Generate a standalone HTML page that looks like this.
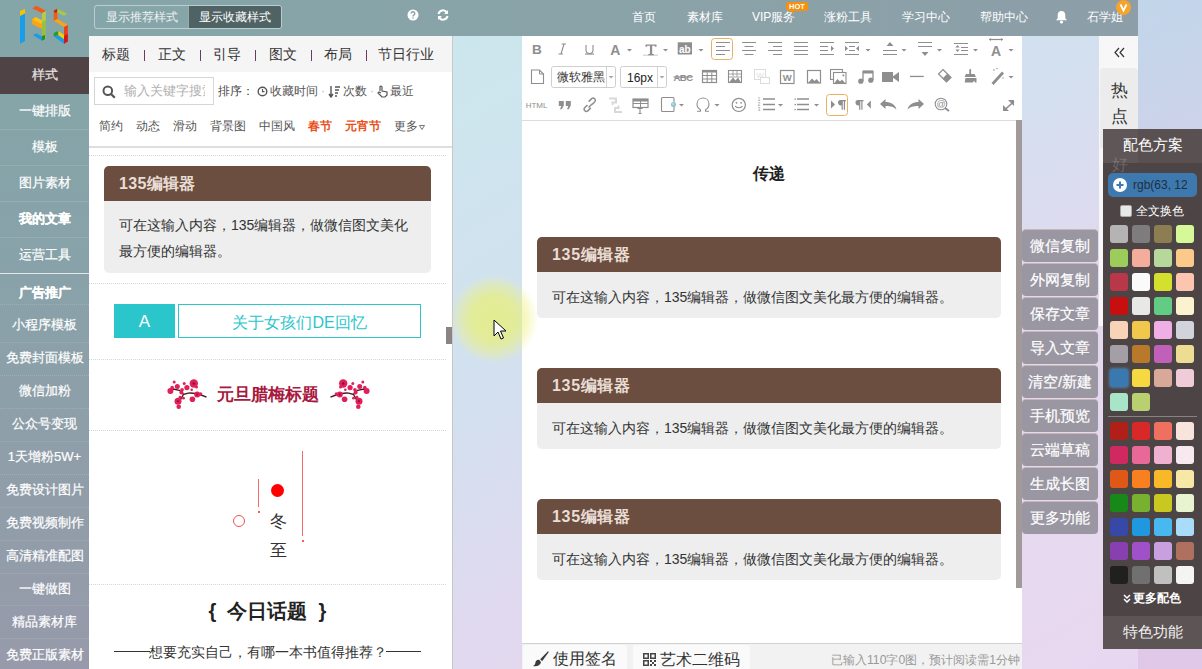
<!DOCTYPE html>
<html><head><meta charset="utf-8">
<style>
*{margin:0;padding:0;box-sizing:border-box}
html,body{width:1202px;height:669px;overflow:hidden}
body{font-family:"Liberation Sans",sans-serif;position:relative;background:linear-gradient(150deg,#c8e8ee 0%,#cde6ee 26%,#d3e0ef 50%,#e1d9ef 67%,#e7d9f0 88%,#e8d6f0 100%)}
.a{position:absolute}
.c{text-align:center;white-space:nowrap}
#topbar{left:0;top:0;width:1138px;height:36px;background:linear-gradient(90deg,#84a6a8 0%,#89a3a8 50%,#8d9ea8 100%)}
#sidebar{left:0;top:36px;width:89px;height:633px;background:linear-gradient(180deg,#84a6a8 0%,#88a2a9 35%,#979aaa 100%)}
.si{position:absolute;left:0;width:89px;text-align:center;color:#fff;font-size:13px;line-height:16px;white-space:nowrap;-webkit-text-stroke:.2px #fff}
.sl{position:absolute;left:0;width:89px;height:0;border-top:1px dotted rgba(255,255,255,.16)}
.nav{position:absolute;top:9px;color:#fff;font-size:12px;line-height:17px;white-space:nowrap}
#panel{left:89px;top:36px;width:364px;height:633px;background:#fff;border-right:1px solid #c8c8c8;overflow:hidden}
.tab{position:absolute;top:10px;font-size:14px;line-height:16px;color:#333}
.bar{position:absolute;top:14px;width:1px;height:11px;background:#6e3a64}
.dot{position:absolute;left:0;width:357px;height:0;border-top:1px dotted #d5d5d5}
.card{position:absolute;left:15px;width:327px;border-radius:5px;overflow:hidden;background:#eeeeee}
.card .h{height:35px;background:#6b4e3f;color:#e9ddd5;font-weight:bold;font-size:16px;line-height:35px;padding-left:15px;letter-spacing:.3px}
.card .b{padding:10.5px 15px 0 15px;font-size:14px;line-height:26px;color:#333}
#editor{left:522px;top:36px;width:500px;height:633px;background:#fff}
.ecard{position:absolute;left:15px;width:464px;border-radius:5px;overflow:hidden;background:#eeeeee}
.ecard .h{height:35px;background:#6b4e3f;color:#e9ddd5;font-weight:bold;font-size:16px;line-height:35px;padding-left:15px;letter-spacing:.7px}
.ecard .b{height:46px;font-size:14px;line-height:46px;color:#333;padding:1.5px 0 0 15px;white-space:nowrap;overflow:hidden}
.ic{position:absolute}
.fb{position:absolute;left:1022px;width:76px;height:33px;background:#9a96a2;border-top:1px solid #c9b6b5;border-radius:4px;color:#fff;font-size:15px;line-height:31px;text-align:center;white-space:nowrap;-webkit-text-stroke:.2px #fff}
#cp{left:1103px;top:129px;width:99px;height:520px;background:#4c4445}
.sw{position:absolute;width:18px;height:18px;border-radius:3px}
</style></head><body>

<div class="a" style="left:1138px;top:0;width:64px;height:669px;background:linear-gradient(180deg,rgba(78,141,197,.13),rgba(110,120,190,.08) 50%,rgba(152,74,160,.1))"></div>
<!-- top bar -->
<div id="topbar" class="a">
  <div class="a" style="left:94px;top:5px;width:188px;height:24px;border:1px solid rgba(255,255,255,.45);border-radius:3px;overflow:hidden">
    <div class="a c" style="left:0;top:0;width:93px;height:22px;color:#eef2f2;font-size:12px;line-height:22px">显示推荐样式</div>
    <div class="a c" style="left:93px;top:0;width:93px;height:22px;background:#4f6264;border-left:1px solid rgba(255,255,255,.45);color:#fff;font-size:12px;line-height:22px">显示收藏样式</div>
  </div>
  <svg class="a" style="left:407px;top:9px" width="12" height="12" viewBox="0 0 12 12"><circle cx="6" cy="6" r="5.5" fill="#fff"/><path d="M4.2 4.6a1.8 1.8 0 1 1 2.6 1.6c-.6.3-.8.6-.8 1.2" stroke="#86a3a8" stroke-width="1.4" fill="none"/><circle cx="6" cy="9" r=".8" fill="#86a3a8"/></svg>
  <svg class="a" style="left:437px;top:9px" width="12" height="12" viewBox="0 0 12 12"><path d="M1.5 5a4.5 4.5 0 0 1 8.2-1.6M10.5 7a4.5 4.5 0 0 1-8.2 1.6" stroke="#fff" stroke-width="2" fill="none"/><path d="M11 1v4H7z M1 11V7h4z" fill="#fff"/></svg>
  <div class="nav" style="left:632px">首页</div>
  <div class="nav" style="left:687px">素材库</div>
  <div class="nav" style="left:752px">VIP服务</div>
  <div class="a c" style="left:786px;top:2px;width:22px;height:9px;background:#f7900a;border-radius:2px;color:#fff;font-size:7.5px;line-height:9px;font-weight:bold">HOT</div><div class="a" style="left:791px;top:11px;width:0;height:0;border-top:3px solid #f7900a;border-left:3px solid transparent"></div>
  <div class="nav" style="left:824px">涨粉工具</div>
  <div class="nav" style="left:902px">学习中心</div>
  <div class="nav" style="left:980px">帮助中心</div>
  <svg class="a" style="left:1055px;top:10px" width="13" height="14" viewBox="0 0 13 14"><path d="M6.5 1c2.5 0 3.8 2 3.8 4.2v3l1.7 2H1l1.7-2v-3C2.7 3 4 1 6.5 1z" fill="#fff"/><circle cx="6.5" cy="12" r="1.6" fill="#fff"/></svg>
  <div class="nav" style="left:1087px">石学姐</div>
  <svg class="a" style="left:1115px;top:-1px" width="17" height="17" viewBox="0 0 17 17"><circle cx="8.5" cy="8.5" r="7.5" fill="#f4a52a"/><path d="M5.5 5.5l3 6 3-6" stroke="#fff" stroke-width="1.8" fill="none"/></svg>
</div>

<!-- sidebar -->
<div id="sidebar" class="a">
  <div class="a" style="left:0;top:21px;width:89px;height:37px;background:#4f4345"></div>
  <div class="si" style="top:31px;color:#e2dcdc">样式</div>
  <div class="si" style="top:67px">一键排版</div>
  <div class="sl" style="top:93px;border-top-style:solid;border-top-color:rgba(255,255,255,.12)"></div>
  <div class="si" style="top:103px">模板</div>
  <div class="sl" style="top:129px;border-top-style:solid;border-top-color:rgba(255,255,255,.12)"></div>
  <div class="si" style="top:139px">图片素材</div>
  <div class="sl" style="top:165px;border-top-style:solid;border-top-color:rgba(255,255,255,.12)"></div>
  <div class="si" style="top:175px;font-weight:bold">我的文章</div>
  <div class="sl" style="top:201px;border-top-style:solid;border-top-color:rgba(255,255,255,.12)"></div>
  <div class="si" style="top:211px">运营工具</div>
  <div class="a" style="left:0;top:237px;width:89px;height:1px;background:rgba(255,255,255,.75)"></div>
  <div class="si" style="top:249px;font-weight:bold">广告推广</div>
  <div class="sl" style="top:268px"></div>
  <div class="si" style="top:281px">小程序模板</div>
  <div class="sl" style="top:306px"></div>
  <div class="si" style="top:314px">免费封面模板</div>
  <div class="sl" style="top:339px"></div>
  <div class="si" style="top:347px">微信加粉</div>
  <div class="sl" style="top:372px"></div>
  <div class="si" style="top:380px">公众号变现</div>
  <div class="sl" style="top:405px"></div>
  <div class="si" style="top:413px">1天增粉5W+</div>
  <div class="sl" style="top:438px"></div>
  <div class="si" style="top:446px">免费设计图片</div>
  <div class="sl" style="top:471px"></div>
  <div class="si" style="top:479px">免费视频制作</div>
  <div class="sl" style="top:504px"></div>
  <div class="si" style="top:512px">高清精准配图</div>
  <div class="sl" style="top:537px"></div>
  <div class="si" style="top:545px">一键做图</div>
  <div class="sl" style="top:569px"></div>
  <div class="si" style="top:578px">精品素材库</div>
  <div class="sl" style="top:602px"></div>
  <div class="si" style="top:611px">免费正版素材</div>
</div>

<!-- logo -->
<svg class="a" style="left:0;top:0" width="80" height="50" viewBox="0 0 80 50">
  <path d="M20 10.8L25 8.7V41L20 43.7z" fill="#1a9de8"/><path d="M20 10.8L25 8.7V13.5L20 16z" fill="#f8c200"/>
  <path d="M32.4 8.3L36.2 5.8L45.8 10.8L42 13.3z" fill="#f25c12"/>
  <path d="M42 13.3L45.8 11.2V38.3L42 40.8z" fill="#98c040"/>
  <path d="M42 13.3L45.8 11.2V20L42 22z" fill="#b8d050" opacity=".8"/>
  <path d="M32 19L35.8 17L42 20.4V29L32 24z" fill="#f7a516"/><path d="M35.8 17L42 20.4V24L33 20z" fill="#f9c418"/>
  <path d="M32.9 35L36.2 33.3L42 36.6V40.8z" fill="#1a9de8"/><path d="M42 36V40.8L45 39V35z" fill="#2a8a2a"/>
  <path d="M53.7 10.8L57.4 8.7V22.5L53.7 20.8z" fill="#f25c12"/><path d="M53.7 10.8L57.4 8.7V12L55 13z" fill="#b02a10"/>
  <path d="M57.4 8.7L67.4 13.7L64 15.8L57.4 12.5z" fill="#a8c848"/>
  <path d="M53.7 20.8L57.4 19.1L67.8 25L64 27z" fill="#f7a516"/>
  <path d="M64 27L67.8 25V41.6L64 43.7z" fill="#e8401a"/><path d="M64 36L67.8 34V41.6L64 43.7z" fill="#d01818"/>
  <path d="M53.7 36.6L58.2 35L64 39V43.7z" fill="#1a9de8"/>
  <path d="M58.2 31L64 35V39L58.2 35z" fill="#f8d000"/><path d="M53.7 33L58.2 31V35L53.7 36.6z" fill="#2a9a30"/>
</svg>

<!-- style panel -->
<div id="panel" class="a">
  <div class="a" style="left:0;top:0;width:364px;height:36px;background:#f5f5f5"></div>
  <div class="tab" style="left:13px">标题</div><div class="bar" style="left:55px"></div>
  <div class="tab" style="left:69px">正文</div><div class="bar" style="left:111px"></div>
  <div class="tab" style="left:124px">引导</div><div class="bar" style="left:166px"></div>
  <div class="tab" style="left:180px">图文</div><div class="bar" style="left:222px"></div>
  <div class="tab" style="left:235px">布局</div><div class="bar" style="left:277px"></div>
  <div class="tab" style="left:289px">节日行业</div>
  <!-- search -->
  <div class="a" style="left:5px;top:41px;width:120px;height:28px;border:1px solid #d6d6d6;background:#fff"></div>
  <svg class="a" style="left:13px;top:49px" width="14" height="14" viewBox="0 0 14 14"><circle cx="5.8" cy="5.8" r="4.3" stroke="#555" stroke-width="2" fill="none"/><path d="M8.8 8.8l4 4" stroke="#555" stroke-width="2.2"/></svg>
  <div class="a" style="left:35px;top:47px;width:81px;overflow:hidden;white-space:nowrap;font-size:13px;line-height:16px;color:#b0b0b0">输入关键字搜索</div>
  <div class="a" style="left:129px;top:48px;font-size:12px;line-height:15px;color:#444;white-space:nowrap">排序：</div>
  <svg class="a" style="left:168px;top:50px" width="11" height="11" viewBox="0 0 11 11"><circle cx="5.5" cy="5.5" r="4.3" stroke="#555" stroke-width="1.4" fill="none"/><path d="M5.5 3v2.7h2" stroke="#555" stroke-width="1.2" fill="none"/></svg>
  <div class="a" style="left:181px;top:48px;font-size:12px;line-height:15px;color:#555;white-space:nowrap">收藏时间</div>
  <div class="a" style="left:232px;top:48px;font-size:12px;line-height:15px;color:#bbb">·</div>
  <svg class="a" style="left:239px;top:49px" width="13" height="13" viewBox="0 0 13 13"><path d="M3 1v10M1 9l2 3 2-3" stroke="#555" stroke-width="1.4" fill="none"/><path d="M7 2h5M7 5h4M7 8h3M7 11h2" stroke="#555" stroke-width="1.3"/></svg>
  <div class="a" style="left:254px;top:48px;font-size:12px;line-height:15px;color:#555;white-space:nowrap">次数</div>
  <div class="a" style="left:281px;top:48px;font-size:12px;line-height:15px;color:#bbb">·</div>
  <svg class="a" style="left:288px;top:49px" width="12" height="13" viewBox="0 0 12 13"><path d="M3 6V2a1 1 0 0 1 2 0v4l5 1v3l-2 2H5L1 8l1-1 2 1" stroke="#555" stroke-width="1.2" fill="none"/></svg>
  <div class="a" style="left:301px;top:48px;font-size:12px;line-height:15px;color:#555;white-space:nowrap">最近</div>
  <!-- categories -->
  <div class="a" style="left:10px;top:83px;font-size:12px;line-height:15px;color:#555;white-space:nowrap">简约</div>
  <div class="a" style="left:47px;top:83px;font-size:12px;line-height:15px;color:#555;white-space:nowrap">动态</div>
  <div class="a" style="left:84px;top:83px;font-size:12px;line-height:15px;color:#555;white-space:nowrap">滑动</div>
  <div class="a" style="left:121px;top:83px;font-size:12px;line-height:15px;color:#555;white-space:nowrap">背景图</div>
  <div class="a" style="left:170px;top:83px;font-size:12px;line-height:15px;color:#555;white-space:nowrap">中国风</div>
  <div class="a" style="left:219px;top:83px;font-size:12px;line-height:15px;color:#e9501a;font-weight:bold;white-space:nowrap">春节</div>
  <div class="a" style="left:256px;top:83px;font-size:12px;line-height:15px;color:#e9501a;font-weight:bold;white-space:nowrap">元宵节</div>
  <div class="a" style="left:305px;top:83px;font-size:12px;line-height:15px;color:#555;white-space:nowrap">更多</div><svg class="a" style="left:330px;top:89px" width="6" height="5" viewBox="0 0 6 5"><path d="M.5 .5h5L3 4.5z" fill="none" stroke="#666" stroke-width=".9"/></svg>
  <div class="a" style="left:0;top:110px;width:364px;height:2px;background:#dedede"></div>
  <div class="dot" style="top:119px"></div>
  <!-- card 1 -->
  <div class="card" style="top:130px;height:107px">
    <div class="h">135编辑器</div>
    <div class="b">可在这输入内容，135编辑器，做微信图文美化最方便的编辑器。</div>
  </div>
  <div class="dot" style="top:247px"></div>
  <!-- card 2 -->
  <div class="a c" style="left:25px;top:268px;width:61px;height:34px;background:#2bc6cb;color:#fff;font-size:17px;line-height:36px">A</div>
  <div class="a c" style="left:89px;top:268px;width:243px;height:34px;border:1px solid #2bc6cb;color:#2bc6cb;font-size:16px;line-height:35px">关于女孩们DE回忆</div>
  <div class="dot" style="top:323px"></div>
  <!-- card 3 -->
  <svg class="a" style="left:78px;top:343px" width="42" height="32" viewBox="0 0 42 32"><g><path d="M39.5 18.2Q35 16 29.5 14.8T21.3 14.1L16.5 15.5Q14 12 12.4 11.3L6.2 10L1.4 12M16.5 15.5L13 21.3" stroke="#4a1c1c" stroke-width="1.4" fill="none"/>
    <g fill="#e0205a"><circle cx="26.8" cy="4.5" r="4.2"/><circle cx="7.2" cy="3.1" r="1.5"/><circle cx="10.3" cy="7.6" r="2.5"/><circle cx="3.4" cy="12" r="3"/><circle cx="5.2" cy="8.6" r="1.8"/><circle cx="17.2" cy="4.5" r="1.5"/><circle cx="19.9" cy="8.6" r="2.6"/><circle cx="15.1" cy="10.7" r="1.8"/><circle cx="14.4" cy="13.4" r="2"/><circle cx="11" cy="22.3" r="3.5"/><circle cx="11.7" cy="27.8" r="2.3"/><circle cx="13" cy="18.2" r="1.4"/><circle cx="16.5" cy="19.2" r="1.4"/><circle cx="25.4" cy="20.3" r="2.8"/><circle cx="30.2" cy="15.5" r="3"/><circle cx="33.7" cy="14.8" r="1.6"/><circle cx="24.7" cy="10.7" r="1.3"/><circle cx="29.5" cy="8" r="1.5"/></g>
    <g fill="#8a1030"><circle cx="26.8" cy="4.5" r="1.2"/><circle cx="11" cy="22.3" r="1"/><circle cx="30.2" cy="15.5" r=".9"/></g></g></svg>
  <div class="a" style="left:128px;top:349px;font-size:17px;line-height:20px;color:#a8183f;font-weight:bold;white-space:nowrap">元旦腊梅标题</div>
  <svg class="a" style="left:239px;top:343px;transform:scaleX(-1)" width="42" height="32" viewBox="0 0 42 32"><g><path d="M39.5 18.2Q35 16 29.5 14.8T21.3 14.1L16.5 15.5Q14 12 12.4 11.3L6.2 10L1.4 12M16.5 15.5L13 21.3" stroke="#4a1c1c" stroke-width="1.4" fill="none"/>
    <g fill="#e0205a"><circle cx="26.8" cy="4.5" r="4.2"/><circle cx="7.2" cy="3.1" r="1.5"/><circle cx="10.3" cy="7.6" r="2.5"/><circle cx="3.4" cy="12" r="3"/><circle cx="5.2" cy="8.6" r="1.8"/><circle cx="17.2" cy="4.5" r="1.5"/><circle cx="19.9" cy="8.6" r="2.6"/><circle cx="15.1" cy="10.7" r="1.8"/><circle cx="14.4" cy="13.4" r="2"/><circle cx="11" cy="22.3" r="3.5"/><circle cx="11.7" cy="27.8" r="2.3"/><circle cx="13" cy="18.2" r="1.4"/><circle cx="16.5" cy="19.2" r="1.4"/><circle cx="25.4" cy="20.3" r="2.8"/><circle cx="30.2" cy="15.5" r="3"/><circle cx="33.7" cy="14.8" r="1.6"/><circle cx="24.7" cy="10.7" r="1.3"/><circle cx="29.5" cy="8" r="1.5"/></g>
    <g fill="#8a1030"><circle cx="26.8" cy="4.5" r="1.2"/><circle cx="11" cy="22.3" r="1"/><circle cx="30.2" cy="15.5" r=".9"/></g></g></svg>
  <div class="dot" style="top:394px"></div>
  <!-- card 4 -->
  <div class="a" style="left:213px;top:415px;width:1px;height:85px;background:#f26a6a"></div>
  <div class="a" style="left:212.5px;top:504px;width:2px;height:2px;border-radius:1px;background:#f22"></div>
  <div class="a" style="left:169px;top:443px;width:1px;height:28px;background:#f26a6a"></div>
  <div class="a" style="left:168.5px;top:475px;width:2px;height:2px;border-radius:1px;background:#f22"></div>
  <div class="a" style="left:182px;top:448px;width:13px;height:13px;border-radius:50%;background:#ff0000"></div>
  <div class="a" style="left:144px;top:479px;width:12px;height:12px;border-radius:50%;border:1px solid #f05555"></div>
  <div class="a c" style="left:178px;top:476px;width:22px;font-size:17px;line-height:20px;color:#333">冬</div>
  <div class="a c" style="left:178px;top:505px;width:22px;font-size:17px;line-height:20px;color:#333">至</div>
  <div class="dot" style="top:548px"></div>
  <!-- card 5 -->
  <div class="a c" style="left:0;top:563px;width:357px;font-size:20px;line-height:24px;color:#222;font-weight:bold">{&nbsp; 今日话题 &nbsp;}</div>
  <div class="a" style="left:25px;top:615px;width:36px;height:1px;background:#333"></div><div class="a c" style="left:0;top:608px;width:357px;font-size:14px;line-height:17px;color:#333">想要充实自己，有哪一本书值得推荐？</div><div class="a" style="left:297px;top:615px;width:35px;height:1px;background:#333"></div>
  <!-- scrollbar thumb -->
  <div class="a" style="left:357px;top:291px;width:6px;height:17px;background:#8b8384"></div>
</div>

<!-- editor -->
<div id="editor" class="a">
  <div class="a" style="left:0;top:84px;width:500px;height:1px;background:#dcdcdc"></div>
  <svg class="a" style="left:0;top:0" width="500" height="84" viewBox="522 36 500 84">
<g fill="#8e8e8e" stroke="none">
<!-- row1 -->
<text x="536.8" y="54.3" font-family="Liberation Sans" font-weight="bold" font-size="13.5" text-anchor="middle">B</text>
<path d="M561.5 44h4.5M558.5 54h4.5M564 44l-3 10" stroke="#8e8e8e" stroke-width="1.1" fill="none"/>
<path d="M586 45v5a3.5 3.5 0 0 0 7 0v-5" stroke="#8e8e8e" stroke-width="1.1" fill="none"/><rect x="585" y="53.5" width="9" height="1.1"/>
<text x="615.4" y="54.5" font-family="Liberation Sans" font-weight="bold" font-size="14" text-anchor="middle">A</text>
<path d="M627 49h5l-2.5 2.5z"/>
<path d="M645.5 44.5h11v2.2h-1.6v-1h-2.7v8.3h1.6v1.2h-5.5v-1.2h1.6v-8.3h-2.7v1h-1.7z"/>
<rect x="643" y="54.5" width="15" height="1.4" opacity=".35"/>
<path d="M663 49h5l-2.5 2.5z"/>
<rect x="677.7" y="42.3" width="14.3" height="12.2"/>
<text x="684.9" y="52.6" font-family="Liberation Sans" font-weight="bold" font-size="10" fill="#fff" text-anchor="middle">ab</text>
<path d="M698.5 49h5l-2.5 2.5z"/>
<rect x="711.5" y="38.5" width="21" height="21" rx="3" fill="none" stroke="#e8b062" stroke-width="1"/>
<g stroke="#8e8e8e" stroke-width="1.2" fill="none">
<path d="M716 42.5h14M716 46.5h9M716 50.5h14M716 54.5h9"/>
<path d="M742 42.5h14M744.5 46.5h9M742 50.5h14M744.5 54.5h9"/>
<path d="M768 42.5h14M773 46.5h9M768 50.5h14M773 54.5h9"/>
<path d="M794 42.5h14M794 46.5h14M794 50.5h14M794 54.5h14"/>
<path d="M820 42.5h14M820 46.5h8M820 50.5h8M820 54.5h14"/>
<path d="M845 42.5h14M849 46.5h6M849 50.5h6M845 54.5h14"/>
<path d="M883 50.5h14M883 54.5h14"/>
<path d="M918 42.5h14M918 46.5h14"/>
<path d="M954 43.5h14M961 47.5h7M961 50.5h7M954 54.5h14"/>
<path d="M989 39.5h14"/>
</g>
<path d="M834 48.5l-3-2.8v5.6zM845 45.7v5.6l3-2.8zM859 45.7v5.6l-3-2.8z"/>
<path d="M865.5 49h5l-2.5 2.5z"/>
<path d="M890 42l-3.5 4h7z"/><path d="M901.5 49h5l-2.5 2.5z"/>
<path d="M925 56l-3.5-4h7z"/><path d="M937 49h5l-2.5 2.5z"/>
<path d="M957.5 45l-2.2 2.5h4.4zM957.5 52l-2.2-2.5h4.4z"/><path d="M973 49h5l-2.5 2.5z"/>
<path d="M989 39.5l2-1.5v3zM1003 39.5l-2-1.5v3z"/>
<text x="996" y="55.5" font-family="Liberation Sans" font-weight="bold" font-size="14" text-anchor="middle">A</text>
<path d="M1008.5 49h5l-2.5 2.5z"/>
<!-- row2 -->
<path d="M531.5 70h8l4 4v9.5h-12z" fill="none" stroke="#8e8e8e" stroke-width="1.1"/><path d="M539.5 70v4h4" fill="none" stroke="#8e8e8e" stroke-width="1"/>
<rect x="551.5" y="66.5" width="64" height="21" rx="2" fill="#fff" stroke="#cfcfcf"/>
<path d="M606.5 67v20" stroke="#d5d5d5"/>
<path d="M608.5 76h5l-2.5 2.5z" fill="#aaa"/>
<rect x="620.5" y="66.5" width="46" height="21" rx="2" fill="#fff" stroke="#cfcfcf"/>
<path d="M657.5 67v20" stroke="#d5d5d5"/>
<path d="M659.5 76h5l-2.5 2.5z" fill="#aaa"/>
<text x="683" y="81" font-family="Liberation Sans" font-weight="bold" font-size="9.5" text-anchor="middle" letter-spacing="-0.5">ABC</text>
<rect x="673.5" y="76.4" width="19" height="1.2"/>
<rect x="702.5" y="70.5" width="14" height="12" fill="none" stroke="#8e8e8e" stroke-width="1.2"/><rect x="702.5" y="70" width="14" height="2.5"/>
<path d="M702.5 75.5h14M702.5 79h14M707.2 72.5v10M711.8 72.5v10" stroke="#8e8e8e" stroke-width="1"/>
<rect x="728.5" y="70.5" width="13" height="12" fill="none" stroke="#8e8e8e" stroke-width="1.1"/>
<path d="M728.5 74h13M728.5 77h13M733 70.5v6M737 70.5v6" stroke="#8e8e8e" stroke-width=".8"/>
<path d="M729 82.5l4-5 2.5 3 2.5-3 3 5z"/>
<g opacity=".3"><rect x="754.5" y="69.5" width="11" height="10" fill="none" stroke="#8e8e8e"/><text x="760" y="78" font-family="Liberation Sans" font-size="8" text-anchor="middle">W</text><rect x="760.5" y="77.5" width="9" height="6" fill="#fff" stroke="#8e8e8e"/></g>
<rect x="780.5" y="70.5" width="13.5" height="13" fill="none" stroke="#8e8e8e" stroke-width="1.2"/>
<text x="787.2" y="81.2" font-family="Liberation Sans" font-weight="bold" font-size="9.5" text-anchor="middle">W</text>
<rect x="807.5" y="70.5" width="13" height="12.5" fill="none" stroke="#8e8e8e" stroke-width="1.2"/>
<path d="M808 83l4-4.5 2.5 2.5 2-2 3.5 4z"/>
<rect x="830.5" y="69.5" width="12" height="10" fill="none" stroke="#8e8e8e" stroke-width="1.1"/>
<rect x="833.5" y="72.5" width="12.5" height="11" fill="#fff" stroke="#8e8e8e" stroke-width="1.1"/>
<path d="M834 83.5l3.5-4.5 2.5 2.5 2-2 3.5 4z"/><rect x="842.5" y="74.5" width="1.8" height="1.8"/>
<path d="M863 81V71.5h10V80" stroke="#8e8e8e" stroke-width="1.3" fill="none"/><rect x="863" y="70.5" width="10" height="3"/>
<circle cx="860.8" cy="81.2" r="2.6"/><circle cx="870.8" cy="80.2" r="2.6"/>
<rect x="882" y="72" width="11" height="10"/><path d="M892 77l7-5v10z"/>
<rect x="910" y="75.8" width="13.7" height="1.3"/>
<path d="M943 69.5l8 8-4.5 4.5-8-8z" fill="none" stroke="#8e8e8e" stroke-width="1.2"/><path d="M947.5 73.5l3.5 4-4.5 4.5-4-3.5z"/>
<rect x="969.3" y="69.2" width="1.8" height="5"/><path d="M966 74h8.5l1.5 3h-11.5zM965.5 78h11v4.6h-1.5l-1-2-1 2h-8.3z"/>
<path d="M991.5 83l10.5-11.5 2 2-10.5 11.5z"/><circle cx="994" cy="70" r=".8"/><circle cx="997" cy="68.5" r=".7"/><circle cx="1003" cy="78" r=".7"/>
<path d="M1008.5 76h5l-2.5 2.5z"/>
<!-- row3 -->
<text x="536.6" y="107.6" font-family="Liberation Sans" font-size="8" text-anchor="middle">HTML</text>
<path d="M558.8 101h5v4.5l-2 3.8h-1.8l1.3-3.3h-2.5zM565.8 101h5v4.5l-2 3.8h-1.8l1.3-3.3h-2.5z"/>
<path d="M587.5 105l-2.8 2.8a2.2 2.2 0 0 0 3.1 3.1l3-3M592 104.5l2.8-2.8a2.2 2.2 0 0 0-3.1-3.1l-3 3M588.5 107.5l3.5-3.5" stroke="#8e8e8e" stroke-width="1.5" fill="none"/>
<g opacity=".35"><path d="M609 98.5h7v4h-3.5v2.5M622 112h-7v-4h3.5v-2.5" stroke="#8e8e8e" stroke-width="2" fill="none"/></g>
<rect x="633" y="99" width="15" height="8.5" fill="none" stroke="#8e8e8e" stroke-width="1.2"/><rect x="633" y="99" width="15" height="2.5"/><path d="M633 103.5h15M640.5 101v6.5" stroke="#8e8e8e" stroke-width="1"/>
<path d="M637.5 108.5h5M640 108.5v5M638.5 113.5h3" stroke="#8e8e8e" stroke-width="1.1" fill="none"/>
<rect x="661.5" y="97.5" width="12.5" height="14" rx="1" fill="none" stroke="#8e8e8e" stroke-width="1.1"/>
<circle cx="673.5" cy="104.5" r="2.6" fill="#8ec4e8"/><circle cx="673" cy="104" r="1.2" fill="#b8e0a0"/>
<path d="M679 104h5l-2.5 2.5z"/>
<path d="M697 111.3h3.5v-1.5c-2.2-1.2-3.5-3.3-3.5-5.8 0-3.8 2.8-6 6-6s6 2.2 6 6c0 2.5-1.3 4.6-3.5 5.8v1.5h3.5" stroke="#8e8e8e" stroke-width="1.1" fill="none"/>
<path d="M714.5 104h5l-2.5 2.5z"/>
<circle cx="738.8" cy="104.9" r="6.6" fill="none" stroke="#8e8e8e" stroke-width="1.2"/><circle cx="736.5" cy="102.8" r=".9"/><circle cx="741.1" cy="102.8" r=".9"/>
<path d="M735.2 106c1 2.3 6.2 2.3 7.2 0" stroke="#8e8e8e" stroke-width="1.1" fill="none"/>
<text x="759" y="101.3" font-family="Liberation Sans" font-size="4.5" text-anchor="middle">1</text><text x="759" y="106.3" font-family="Liberation Sans" font-size="4.5" text-anchor="middle">2</text><text x="759" y="111.3" font-family="Liberation Sans" font-size="4.5" text-anchor="middle">3</text>
<path d="M763 99h12M763 104.5h12M763 109.5h12" stroke="#8e8e8e" stroke-width="1.3"/>
<path d="M778 104h5l-2.5 2.5z"/>
<path d="M797 99h12M797 104.5h12M797 109.5h12" stroke="#8e8e8e" stroke-width="1.3"/><path d="M794.5 98.5h1.4v1.2h-1.4zM794.5 104h1.4v1.2h-1.4zM794.5 109h1.4v1.2h-1.4z"/>
<path d="M814 104h5l-2.5 2.5z"/>
<rect x="826.5" y="94.5" width="21" height="21" rx="3" fill="none" stroke="#e8b062" stroke-width="1"/>
<path d="M831 100.5v8l4-4z"/>
<path d="M840 100h6v1.3h-1v8.5h-1.2v-8.5h-1v8.5h-1.2v-4.5a2.6 2.6 0 0 1 -1.6-5.3z"/>
<path d="M857.5 100h6v1.3h-1v8.5h-1.2v-8.5h-1v8.5h-1.2v-4.5a2.6 2.6 0 0 1 -1.6-5.3z"/>
<path d="M870.8 100.5v8l-4-4z"/>
<path d="M880 104l5.5-5v3c5 0 9.5 2 11 7.5-2.5-2.5-5.5-3.5-11-3.5v3z"/>
<path d="M924 104l-5.5-5v3c-5 0-9.5 2-11 7.5 2.5-2.5 5.5-3.5 11-3.5v3z"/>
<circle cx="941" cy="104" r="5.8" fill="none" stroke="#8e8e8e" stroke-width="1.1"/>
<text x="941" y="107" font-family="Liberation Sans" font-size="9" text-anchor="middle">@</text>
<path d="M945 108l4 3" stroke="#8e8e8e" stroke-width="2"/>
<path d="M1005 109.5l9-8" stroke="#8e8e8e" stroke-width="1.6"/><path d="M1003 111v-6l6 6zM1014 100v6l-6-6z"/>
</g>
</svg>

  <div class="a" style="left:35px;top:34px;font-size:12px;line-height:15px;color:#333;white-space:nowrap">微软雅黑</div>
  <div class="a" style="left:105px;top:35px;font-size:12px;line-height:15px;color:#222;white-space:nowrap">16px</div>
  <div class="a c" style="left:0;top:128px;width:494px;font-size:16px;line-height:20px;font-weight:bold;color:#222">传递</div>
  <div class="ecard" style="top:201px;height:81px"><div class="h">135编辑器</div><div class="b">可在这输入内容，135编辑器，做微信图文美化最方便的编辑器。</div></div>
  <div class="ecard" style="top:332px;height:81px"><div class="h">135编辑器</div><div class="b">可在这输入内容，135编辑器，做微信图文美化最方便的编辑器。</div></div>
  <div class="ecard" style="top:463px;height:81px"><div class="h">135编辑器</div><div class="b">可在这输入内容，135编辑器，做微信图文美化最方便的编辑器。</div></div>
  <div class="a" style="left:494px;top:84px;width:6px;height:468px;background:#a29a9a"></div>
  <!-- bottom bar -->
  <div class="a" style="left:0;top:607px;width:500px;height:26px;background:#f2f2f2;border-top:1px solid #d2d2d2"></div>
  <div class="a" style="left:1px;top:609px;width:104px;height:24px;background:#fafafa;border-radius:3px 3px 0 0"></div>
  <svg class="a" style="left:10px;top:614px" width="17" height="17" viewBox="0 0 17 17"><path d="M16 1.2L8.2 9.3l1.9 1.9L16.8 2z" fill="#3a3a3a"/><path d="M7.3 9.8c-2.6-.3-4 1.6-4 3.4 0 1.2-1 2.2-2.3 2.8 3.6.7 7.3-.3 8-3.8z" fill="#3a3a3a"/></svg>
  <div class="a" style="left:31px;top:614px;font-size:16px;line-height:18px;color:#333;white-space:nowrap">使用签名</div>
  <div class="a" style="left:111px;top:609px;width:117px;height:24px;background:#fafafa;border-radius:3px 3px 0 0"></div>
  <svg class="a" style="left:121px;top:617px" width="13" height="13" viewBox="0 0 13 13"><path d="M0 0h6v6H0zM7 0h6v6H7zM0 7h6v6H0z" fill="#444"/><path d="M1.5 1.5h3v3h-3zM8.5 1.5h3v3h-3zM1.5 8.5h3v3h-3z" fill="#fafafa"/><path d="M7 7h2v2H7zM11 7h2v2h-2zM9 9h2v2H9zM7 11h2v2H7zM11 11h2v2h-2z" fill="#444"/></svg>
  <div class="a" style="left:138px;top:615px;font-size:16px;line-height:18px;color:#333;white-space:nowrap">艺术二维码</div>
  <div class="a" style="left:309px;top:617px;width:191px;overflow:hidden;font-size:12.2px;line-height:15px;color:#999;white-space:nowrap">已输入110字0图，预计阅读需1分钟</div>
</div>

<!-- floating buttons -->
<div class="fb" style="top:229px">微信复制</div>
<div class="fb" style="top:263px">外网复制</div>
<div class="fb" style="top:297px">保存文章</div>
<div class="fb" style="top:331px">导入文章</div>
<div class="fb" style="top:365px">清空/新建</div>
<div class="fb" style="top:399px">手机预览</div>
<div class="fb" style="top:433px">云端草稿</div>
<div class="fb" style="top:467px">生成长图</div>
<div class="fb" style="top:501px">更多功能</div>

<!-- right column -->
<div class="a" style="left:1099px;top:36px;width:39px;height:290px;background:#f7f7f7"></div>
<svg class="a" style="left:1114px;top:47px" width="11" height="11" viewBox="0 0 11 11"><path d="M5 1L1 5.5 5 10M10 1L6 5.5 10 10" stroke="#333" stroke-width="1.2" fill="none"/></svg>
<div class="a" style="left:1100px;top:68px;width:38px;height:80px;background:#ececec;border-radius:4px 4px 0 0"></div>
<div class="a c" style="left:1099px;top:78px;width:40px;font-size:17px;line-height:26px;color:#333">热<br>点<br>好</div>

<!-- color panel -->
<div id="cp" class="a">
  <div class="a" style="left:0;top:0;width:99px;height:34px;background:#585051"></div><div class="a" style="left:0;top:0;width:35px;height:34px;background:#5f5657"></div><div class="a c" style="left:7px;top:26px;width:20px;font-size:16px;line-height:20px;color:rgba(255,255,255,.18)">好</div>
  <div class="a c" style="left:0;top:7px;width:99px;font-size:15px;line-height:18px;color:#fff">配色方案</div>
  <div class="a" style="left:5px;top:44px;width:89px;height:24px;background:#3d78ae;border-radius:5px"></div>
  <svg class="a" style="left:10px;top:49px" width="14" height="14" viewBox="0 0 14 14"><circle cx="7" cy="7" r="7" fill="#fff"/><path d="M7 3.5v7M3.5 7h7" stroke="#3d78ae" stroke-width="2"/></svg>
  <div class="a" style="left:30px;top:49px;font-size:12px;line-height:14px;color:#1f2f40;white-space:nowrap;width:54px;overflow:hidden">rgb(63, 124, 174)</div>
  <div class="a" style="left:17px;top:76px;width:12px;height:12px;background:#e8e8e8;border:1px solid #aaa;border-radius:2px"></div>
  <div class="a" style="left:33px;top:75px;font-size:12px;line-height:14px;color:#fff;white-space:nowrap">全文换色</div>
  <div class="sw" style="left:7px;top:96px;background:#b5b3b3"></div>
<div class="sw" style="left:29px;top:96px;background:#7e7c7c"></div>
<div class="sw" style="left:51px;top:96px;background:#8c7e50"></div>
<div class="sw" style="left:73px;top:96px;background:#d6f898"></div>
<div class="sw" style="left:7px;top:120px;background:#9ccc5a"></div>
<div class="sw" style="left:29px;top:120px;background:#f4ad9a"></div>
<div class="sw" style="left:51px;top:120px;background:#b6d99b"></div>
<div class="sw" style="left:73px;top:120px;background:#fbc98a"></div>
<div class="sw" style="left:7px;top:144px;background:#b8384a"></div>
<div class="sw" style="left:29px;top:144px;background:#fafafa"></div>
<div class="sw" style="left:51px;top:144px;background:#d4e02e"></div>
<div class="sw" style="left:73px;top:144px;background:#fbc5b0"></div>
<div class="sw" style="left:7px;top:168px;background:#c80f0f"></div>
<div class="sw" style="left:29px;top:168px;background:#e8e8e8"></div>
<div class="sw" style="left:51px;top:168px;background:#62cc85"></div>
<div class="sw" style="left:73px;top:168px;background:#fbf3cf"></div>
<div class="sw" style="left:7px;top:192px;background:#f8d3b8"></div>
<div class="sw" style="left:29px;top:192px;background:#f0c84c"></div>
<div class="sw" style="left:51px;top:192px;background:#efaee6"></div>
<div class="sw" style="left:73px;top:192px;background:#d2d4dc"></div>
<div class="sw" style="left:7px;top:216px;background:#a49ea6"></div>
<div class="sw" style="left:29px;top:216px;background:#b87a2a"></div>
<div class="sw" style="left:51px;top:216px;background:#c060b8"></div>
<div class="sw" style="left:73px;top:216px;background:#ecdc94"></div>
<div class="sw" style="left:7px;top:240px;background:#3a78b0;box-shadow:0 0 3px 1px rgba(80,160,220,.6)"></div>
<div class="sw" style="left:29px;top:240px;background:#f6d840"></div>
<div class="sw" style="left:51px;top:240px;background:#d8a898"></div>
<div class="sw" style="left:73px;top:240px;background:#f0ccd8"></div>
<div class="sw" style="left:7px;top:264px;background:#a8e4c8"></div>
<div class="sw" style="left:29px;top:264px;background:#b8d070"></div>
  <div class="a" style="left:5px;top:287px;width:89px;height:1px;background:#8a8282"></div>
  <div class="sw" style="left:7px;top:293px;background:#b02018"></div>
<div class="sw" style="left:29px;top:293px;background:#d82828"></div>
<div class="sw" style="left:51px;top:293px;background:#f07060"></div>
<div class="sw" style="left:73px;top:293px;background:#f8e4dc"></div>
<div class="sw" style="left:7px;top:317px;background:#d02860"></div>
<div class="sw" style="left:29px;top:317px;background:#e86898"></div>
<div class="sw" style="left:51px;top:317px;background:#f0b0d0"></div>
<div class="sw" style="left:73px;top:317px;background:#f8e8f0"></div>
<div class="sw" style="left:7px;top:341px;background:#e05818"></div>
<div class="sw" style="left:29px;top:341px;background:#f88020"></div>
<div class="sw" style="left:51px;top:341px;background:#f8b828"></div>
<div class="sw" style="left:73px;top:341px;background:#f8e8a8"></div>
<div class="sw" style="left:7px;top:365px;background:#188818"></div>
<div class="sw" style="left:29px;top:365px;background:#78b030"></div>
<div class="sw" style="left:51px;top:365px;background:#c8c820"></div>
<div class="sw" style="left:73px;top:365px;background:#e8f4d0"></div>
<div class="sw" style="left:7px;top:389px;background:#3848a8"></div>
<div class="sw" style="left:29px;top:389px;background:#2098e0"></div>
<div class="sw" style="left:51px;top:389px;background:#48b8f0"></div>
<div class="sw" style="left:73px;top:389px;background:#a8dcf8"></div>
<div class="sw" style="left:7px;top:413px;background:#8840b0"></div>
<div class="sw" style="left:29px;top:413px;background:#a050c8"></div>
<div class="sw" style="left:51px;top:413px;background:#c8a0e0"></div>
<div class="sw" style="left:73px;top:413px;background:#b07060"></div>
<div class="sw" style="left:7px;top:437px;background:#202020"></div>
<div class="sw" style="left:29px;top:437px;background:#707070"></div>
<div class="sw" style="left:51px;top:437px;background:#c0c0c0"></div>
<div class="sw" style="left:73px;top:437px;background:#f4f4f4"></div>
  <svg class="a" style="left:20px;top:465px" width="8" height="9" viewBox="0 0 8 9"><path d="M1 1l3 3 3-3M1 5l3 3 3-3" stroke="#fff" stroke-width="1.5" fill="none"/></svg><div class="a" style="left:30px;top:462px;font-size:12px;line-height:14px;color:#fff;font-weight:bold;white-space:nowrap">更多配色</div>
  <div class="a" style="left:0;top:487px;width:99px;height:33px;background:#5d5455"></div>
  <div class="a c" style="left:0;top:494px;width:99px;font-size:15px;line-height:18px;color:#f2f2f2">特色功能</div>
</div>

<!-- cursor highlight -->
<div class="a" style="left:449px;top:274px;width:90px;height:90px;border-radius:50%;background:radial-gradient(circle closest-side,rgba(234,240,112,.74) 0%,rgba(234,240,112,.68) 50%,rgba(238,242,130,.38) 78%,rgba(240,240,150,.1) 93%,rgba(240,240,150,0) 100%)"></div>
<svg class="a" style="left:493px;top:319px" width="14" height="22" viewBox="0 0 14 22"><path d="M1 1v16l4-4 3 7 2.5-1-3-7h5.5z" fill="#fff" stroke="#000" stroke-width="1"/></svg>

</body></html>
